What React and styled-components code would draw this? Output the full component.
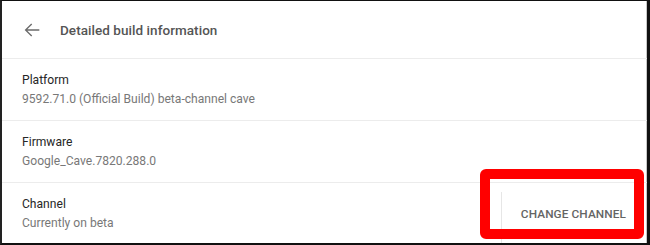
import React from "react";
import styled, { createGlobalStyle } from "styled-components";

const Global = createGlobalStyle`
  html, body {
    margin: 0;
    padding: 0;
    background: #fff;
  }
  body {
    font-family: Roboto, "Noto Sans", "Liberation Sans", sans-serif;
  }
`;

const Frame = styled.div`
  box-sizing: border-box;
  width: 650px;
  height: 245px;
  border-top: 1px solid #111;
  border-left: 2px solid #222;
  border-right: 3px solid #111;
  border-bottom: 2px solid #111;
  background: #fff;
  overflow: hidden;
  position: relative;
  box-shadow: inset -1px 0 0 #c8c8c8;
`;

const Header = styled.div`
  height: 57px;
  display: flex;
  align-items: center;
  gap: 17px;
  padding-left: 19px;
  border-bottom: 1px solid #ececec;
`;

const BackButton = styled.button`
  border: none;
  background: none;
  padding: 0;
  width: 22px;
  height: 22px;
  display: flex;
  align-items: center;
  justify-content: center;
  color: #6b6b6b;
  cursor: pointer;
  svg {
    width: 22px;
    height: 22px;
    fill: currentColor;
  }
`;

const Title = styled.h1`
  margin: 0;
  font-size: 13.5px;
  font-weight: 500;
  color: #555;
  letter-spacing: 0.05px;
`;

const Row = styled.div`
  height: 61px;
  display: flex;
  align-items: center;
  padding-left: 20px;
  border-bottom: ${(p) => (p.$last ? "none" : "1px solid #ececec")};
`;

const Info = styled.div`
  flex: 1;
  display: flex;
  flex-direction: column;
  gap: 3px;
`;

const Label = styled.div`
  font-size: 12.1px;
  color: #262626;
  line-height: 16px;
`;

const Value = styled.div`
  font-size: 12.1px;
  color: #787878;
  line-height: 16px;
`;

const Action = styled.div`
  display: flex;
  align-items: center;
  align-self: stretch;
  margin-top: 9px;
  padding-left: 19px;
  padding-right: 21px;
  border-left: 1px solid #e6e6e6;
`;

const TextButton = styled.button`
  border: none;
  background: none;
  padding: 0;
  font-family: inherit;
  font-size: 11.8px;
  font-weight: 500;
  color: #646464;
  text-transform: uppercase;
  letter-spacing: 0.1px;
  margin-top: -9px;
  cursor: pointer;
`;

const Highlight = styled.div`
  position: absolute;
  left: 478px;
  top: 168px;
  width: 164px;
  height: 70px;
  box-sizing: border-box;
  border: 10px solid #ff0000;
  border-radius: 6px;
  pointer-events: none;
`;

const rows = [
  { label: "Platform", value: "9592.71.0 (Official Build) beta-channel cave" },
  { label: "Firmware", value: "Google_Cave.7820.288.0" },
  { label: "Channel", value: "Currently on beta", action: "Change channel" },
];

export default function App() {
  return (
    <>
      <Global />
      <Frame>
        <Header>
          <BackButton aria-label="Back">
            <svg viewBox="0 0 24 24">
              <path d="M20 11.25H6.9l5.3-5.3-1.06-1.06L4 12l7.14 7.11 1.06-1.06-5.3-5.3H20z" />
            </svg>
          </BackButton>
          <Title>Detailed build information</Title>
        </Header>
        {rows.map((r, i) => (
          <Row key={r.label} $last={i === rows.length - 1}>
            <Info>
              <Label>{r.label}</Label>
              <Value>{r.value}</Value>
            </Info>
            {r.action && (
              <Action>
                <TextButton>{r.action}</TextButton>
              </Action>
            )}
          </Row>
        ))}
        <Highlight />
      </Frame>
    </>
  );
}
